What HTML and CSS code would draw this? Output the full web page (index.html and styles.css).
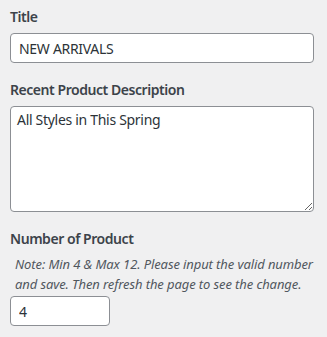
FILE: index.html
```html
<!DOCTYPE html>
<html lang="en">
<head>
  <meta charset="UTF-8" />
  <title>Widget – Recent Products</title>
  <link rel="stylesheet" href="styles.css">
</head>
<body>
  <form class="widget-form">
    <p class="field">
      <label for="widget-title">Title</label>
      <input type="text" id="widget-title" class="text-input" value="NEW ARRIVALS">
    </p>
    <p class="field">
      <label for="widget-desc">Recent Product Description</label>
      <textarea id="widget-desc" class="text-area">All Styles in This Spring</textarea>
    </p>
    <p class="field">
      <label for="widget-count">Number of Product</label>
      <span class="note">Note: Min 4 &amp; Max 12. Please input the valid number and save. Then refresh the page to see the change.</span>
      <input type="number" id="widget-count" class="num-input" value="4">
    </p>
  </form>
</body>
</html>
```

FILE: styles.css
```css
:root {
  --bg: #f0f0f1;
  --text: #2c3338;
  --label: #3c434a;
  --muted: #50575e;
  --border: #8c8f94;
}
* { box-sizing: border-box; }
body {
  margin: 0;
  background: var(--bg);
  font-family: 'Noto Sans', 'Open Sans', sans-serif;
  font-size: 14px;
  color: var(--text);
}
.widget-form {
  padding: 7px 13px 0 10px;
}
.field {
  margin: 0 0 17px;
}
.field label {
  display: block;
  font-weight: 600;
  color: var(--label);
  line-height: 20px;
  margin-bottom: 6px;
  letter-spacing: -0.45px;
}
.text-input,
.text-area,
.num-input {
  display: block;
  width: 100%;
  font-family: inherit;
  font-size: 14px;
  letter-spacing: -0.3px;
  color: var(--text);
  background: #fff;
  border: 1px solid var(--border);
  border-radius: 4px;
  outline: none;
}
.text-input {
  height: 30px;
  padding: 0 8px;
}
.text-area {
  height: 106px;
  padding: 3px 6px;
  line-height: 20px;
  resize: vertical;
}
.note {
  display: block;
  font-style: italic;
  font-size: 13px;
  letter-spacing: -0.1px;
  line-height: 19.5px;
  color: var(--muted);
  padding-left: 5px;
  margin: 4px 0 2px;
}
.num-input {
  width: 100px;
  height: 30px;
  padding: 0 8px;
  -moz-appearance: textfield;
}
.num-input::-webkit-inner-spin-button,
.num-input::-webkit-outer-spin-button {
  -webkit-appearance: none;
  margin: 0;
}
```
